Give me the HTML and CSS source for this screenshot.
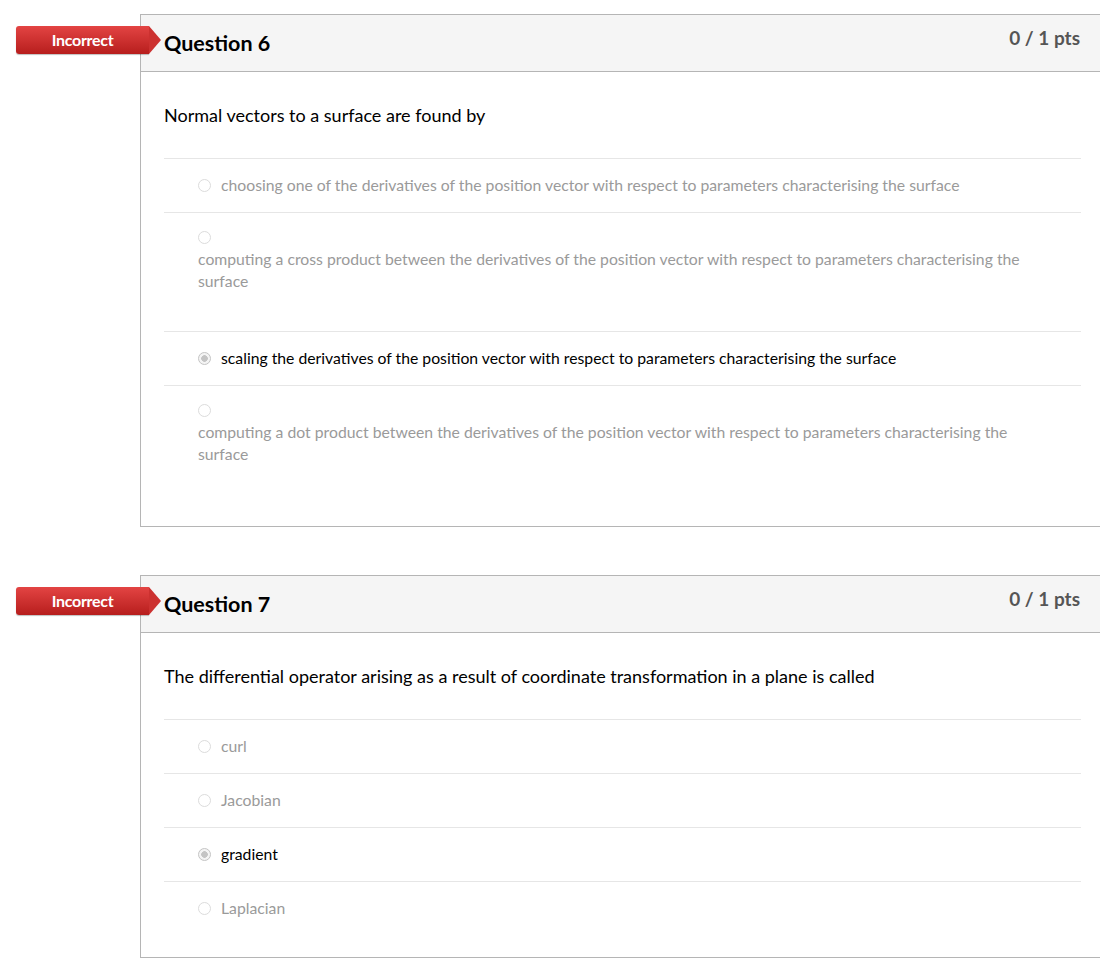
FILE: index.html
```html
<!DOCTYPE html>
<html lang="en">
<head>
    <meta charset="UTF-8">
    <meta name="viewport" content="width=device-width, initial-scale=1.0">
    <title>Quiz results</title>
    <link rel="stylesheet" href="styles.css">
</head>
<body>
    <div class="quiz">
        <div class="question">
            <div class="badge">Incorrect</div>
            <div class="question-header">
                <span class="question-title">Question 6</span>
                <span class="question-pts">0 / 1 pts</span>
            </div>
            <div class="question-body">
                <div class="question-text">Normal vectors to a surface are found by</div>
                <div class="answers">
                    <div class="answer">
                        <span class="radio"></span><span class="answer-text">choosing one of the derivatives of the position vector with respect to parameters characterising the surface</span>
                    </div>
                    <div class="answer long">
                        <span class="radio"></span>
                        <p class="answer-text">computing a cross product between the derivatives of the position vector with respect to parameters characterising the surface</p>
                    </div>
                    <div class="answer selected">
                        <span class="radio"></span><span class="answer-text">scaling the derivatives of the position vector with respect to parameters characterising the surface</span>
                    </div>
                    <div class="answer long">
                        <span class="radio"></span>
                        <p class="answer-text">computing a dot product between the derivatives of the position vector with respect to parameters characterising the surface</p>
                    </div>
                </div>
            </div>
        </div>

        <div class="question">
            <div class="badge">Incorrect</div>
            <div class="question-header">
                <span class="question-title">Question 7</span>
                <span class="question-pts">0 / 1 pts</span>
            </div>
            <div class="question-body">
                <div class="question-text">The differential operator arising as a result of coordinate transformation in a plane is called</div>
                <div class="answers">
                    <div class="answer">
                        <span class="radio"></span><span class="answer-text">curl</span>
                    </div>
                    <div class="answer">
                        <span class="radio"></span><span class="answer-text">Jacobian</span>
                    </div>
                    <div class="answer selected">
                        <span class="radio"></span><span class="answer-text">gradient</span>
                    </div>
                    <div class="answer">
                        <span class="radio"></span><span class="answer-text">Laplacian</span>
                    </div>
                </div>
            </div>
        </div>
    </div>
</body>
</html>
```

FILE: styles.css
```css
html {
    overflow: hidden;
}
body {
    margin: 0;
    font-family: Lato, "Open Sans", sans-serif;
    color: #2d3b45;
    background: #fff;
}
.quiz {
    padding-top: 14px;
}
.question {
    position: relative;
    margin-left: 140px;
    margin-right: -2px;
    margin-bottom: 48px;
    border: 1px solid #b5b5b5;
}
.badge {
    position: absolute;
    left: -125px;
    top: 11px;
    width: 133px;
    height: 28px;
    line-height: 27px;
    font-size: 16px;
    font-weight: bold;
    color: #fff;
    text-align: center;
    background: linear-gradient(#e34443, #b71e1d);
    border-radius: 3px 0 0 3px;
    box-shadow: 0 1px 1px rgba(0, 0, 0, 0.25);
    letter-spacing: -0.3px;
}
.badge::after {
    content: "";
    position: absolute;
    right: -12px;
    top: 0;
    border-top: 14px solid transparent;
    border-bottom: 14px solid transparent;
    border-left: 12px solid #cc3130;
}
.question-header {
    display: flex;
    justify-content: space-between;
    align-items: flex-start;
    height: 56px;
    padding: 0 21px 0 23px;
    background: #f5f5f5;
    border-bottom: 1px solid #b5b5b5;
}
.question-title {
    padding-top: 16px;
    font-size: 21.5px;
    line-height: 24px;
    font-weight: bold;
    color: #000;
}
.question-pts {
    padding-top: 12px;
    font-size: 19px;
    line-height: 22px;
    font-weight: bold;
    color: #555;
}
.question-body {
    padding: 31px 20px 22px 23px;
}
.question-text {
    font-size: 18px;
    line-height: 24px;
    color: #000;
    margin-bottom: 31px;
}
.answer {
    border-top: 1px solid #e6e6e6;
    padding: 15px 30px 16px 34px;
    font-size: 15.75px;
    line-height: 22px;
    color: #9a9a9a;
}
.answer.selected {
    color: #000;
}
.radio {
    display: inline-block;
    width: 11px;
    height: 11px;
    margin-right: 10px;
    vertical-align: -1px;
    border: 1px solid #dcdcdc;
    border-radius: 50%;
    background: #fff;
}
.selected .radio {
    border-color: #c4c4c4;
    background: radial-gradient(circle, #c4c4c4 3px, #f4f4f4 3.6px);
}
.long .radio {
    display: block;
    margin: 3px 0 4px;
}
.long .answer-text {
    margin: 0 0 23px;
}
```
